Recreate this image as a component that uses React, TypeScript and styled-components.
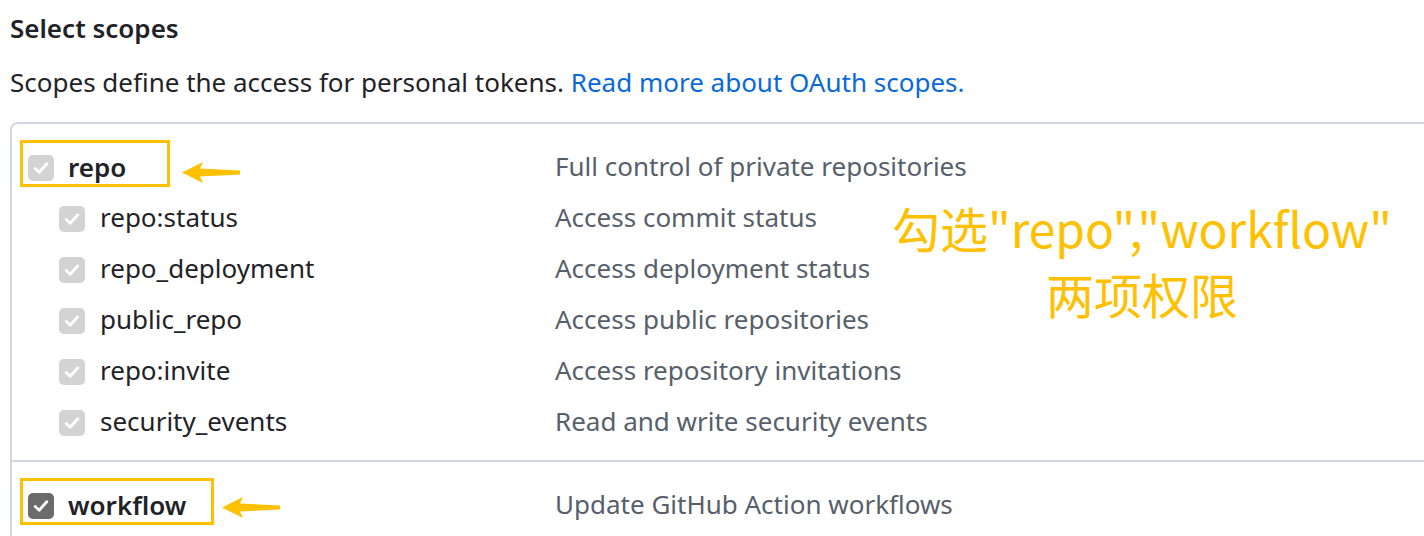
import styled, { createGlobalStyle } from "styled-components";

const GlobalStyle = createGlobalStyle`
  html, body {
    margin: 0;
    padding: 0;
    background: #ffffff;
    overflow: hidden;
  }
  body {
    font-family: "Noto Sans", "Open Sans", sans-serif;
    color: #1f2328;
  }
`;

const Page = styled.div`
  width: 1424px;
  height: 536px;
  padding: 10px 0 0 10px;
  box-sizing: border-box;
  position: relative;
  overflow: hidden;
`;

const Heading = styled.h3`
  margin: 0;
  font-size: 26px;
  font-weight: 600;
  line-height: 36px;
`;

const Note = styled.p`
  margin: 18px 0 0;
  font-size: 26px;
  line-height: 36px;
  color: #1f2328;
`;

const Link = styled.a`
  color: #0969da;
  text-decoration: none;
`;

const ScopeBox = styled.div`
  margin-top: 22px;
  width: 1440px;
  border: 2px solid #d0d7de;
  border-radius: 8px;
`;

const Group = styled.div<{ $last?: boolean }>`
  padding: 18px 0 ${(p) => (p.$last ? "40px" : "12px")};
  border-top: ${(p) => (p.$last ? "2px solid #d0d7de" : "none")};
`;

const Row = styled.div`
  display: grid;
  grid-template-columns: 543px 1fr;
  align-items: center;
  height: 51px;
`;

const Name = styled.label<{ $sub?: boolean }>`
  display: flex;
  align-items: center;
  gap: 15px;
  padding-left: ${(p) => (p.$sub ? "47px" : "16px")};
  font-size: 26px;
  font-weight: ${(p) => (p.$sub ? 400 : 600)};
  color: #1f2328;
`;

const Label = styled.span`
  padding-bottom: 3px;
`;

const Marked = styled.span<{ $w: number }>`
  display: inline-flex;
  align-items: center;
  gap: 14px;
  box-sizing: border-box;
  width: ${(p) => p.$w}px;
  height: 47px;
  margin: -8px 0 0 -8px;
  padding: 9px 0 0 5px;
  border: 3px solid #ffc000;
`;

const Desc = styled.div`
  padding-bottom: 3px;
  font-size: 26px;
  color: #57606a;
`;

const Box = styled.span<{ $dark?: boolean }>`
  display: inline-flex;
  align-items: center;
  justify-content: center;
  width: 26px;
  height: 26px;
  flex: none;
  border-radius: 5px;
  background: ${(p) => (p.$dark ? "#6b6b6b" : "#d3d3d3")};
`;

const Arrow = styled.svg<{ $dx: number; $dy: number }>`
  margin: ${(p) => p.$dy}px 0 0 ${(p) => p.$dx}px;
  flex: none;
`;

const Callout = styled.div`
  position: absolute;
  left: 880px;
  top: 194px;
  width: 524px;
  text-align: center;
  font-family: "Noto Sans CJK SC", "Noto Sans", sans-serif;
  font-size: 48px;
  line-height: 66px;
  color: #ffc000;
`;

const Check = ({ dark }: { dark?: boolean }) => (
  <Box $dark={dark}>
    <svg width="18" height="18" viewBox="0 0 18 18">
      <path
        d="M3.2 9.4 L7.2 13.2 L14.8 4.8"
        fill="none"
        stroke="#ffffff"
        strokeWidth="2.8"
        strokeLinecap="round"
        strokeLinejoin="round"
      />
    </svg>
  </Box>
);

const YellowArrow = ({ dx, dy }: { dx: number; dy: number }) => (
  <Arrow $dx={dx} $dy={dy} width="58" height="22" viewBox="0 0 58 22">
    <path d="M0 10.5 L21 0 L18 6.5 L58 8.5 L58 12.5 L18 14.5 L21 21 Z" fill="#ffc000" />
  </Arrow>
);

const subScopes = [
  ["repo:status", "Access commit status"],
  ["repo_deployment", "Access deployment status"],
  ["public_repo", "Access public repositories"],
  ["repo:invite", "Access repository invitations"],
  ["security_events", "Read and write security events"],
];

const App = () => {
  return (
    <Page>
      <GlobalStyle />
      <Heading>Select scopes</Heading>
      <Note>
        Scopes define the access for personal tokens.{" "}
        <Link href="#">Read more about OAuth scopes.</Link>
      </Note>
      <ScopeBox>
        <Group>
          <Row>
            <Name>
              <Marked $w={150}>
                <Check />
                <Label>repo</Label>
              </Marked>
              <YellowArrow dx={-3} dy={11} />
            </Name>
            <Desc>Full control of private repositories</Desc>
          </Row>
          {subScopes.map(([name, desc]) => (
            <Row key={name}>
              <Name $sub>
                <Check />
                <Label>{name}</Label>
              </Name>
              <Desc>{desc}</Desc>
            </Row>
          ))}
        </Group>
        <Group $last>
          <Row>
            <Name>
              <Marked $w={194}>
                <Check dark />
                <Label>workflow</Label>
              </Marked>
              <YellowArrow dx={-7} dy={4} />
            </Name>
            <Desc>Update GitHub Action workflows</Desc>
          </Row>
        </Group>
      </ScopeBox>
      <Callout>
        勾选"repo","workflow"
        <br />
        两项权限
      </Callout>
    </Page>
  );
};

export default App;
